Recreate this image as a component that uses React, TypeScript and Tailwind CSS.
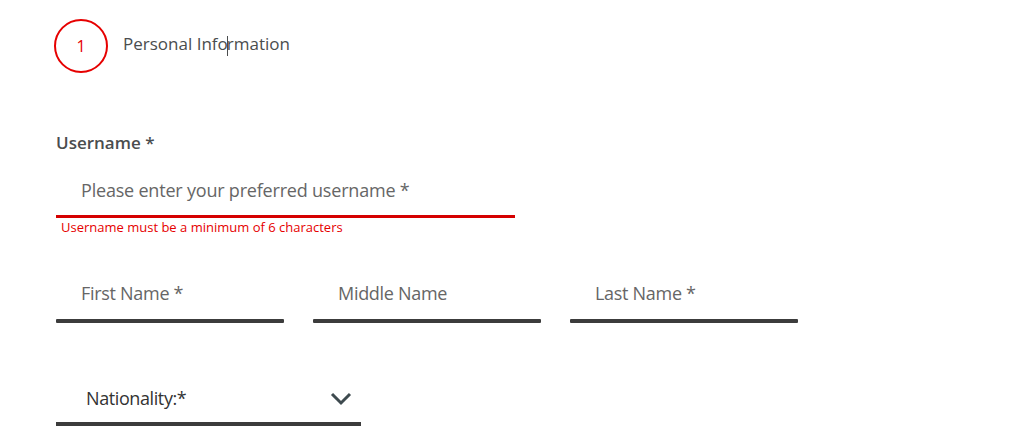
const font = { fontFamily: "'Open Sans', 'Liberation Sans', sans-serif" };

const NameField = ({ label }: { label: string }) => (
  <div className="w-[228px]">
    <div className="h-[50px] flex items-center pl-[25px] text-[18px] text-[#666666] tracking-[-0.3px]">
      {label}
    </div>
    <div className="h-[4px] rounded-[1px] bg-[#3c3c3c]" />
  </div>
);

const App = () => {
  return (
    <div className="w-[1017px] h-[448px] bg-white overflow-hidden pl-[56px]" style={font}>
      {/* Step header */}
      <div className="flex items-center pt-[19px] -ml-[2px]">
        <div className="w-[54px] h-[54px] rounded-full border-2 border-[#e60000] flex items-center justify-center text-[#e60000] text-[16px]">
          1
        </div>
        <div className="ml-[15px] -mt-[4px] text-[17px] text-[#4a4d4e]">
          Personal Info<span className="inline-block w-px h-[20px] bg-[#4a4d4e] align-middle -mx-px" />rmation
        </div>
      </div>

      {/* Username */}
      <div className="mt-[57px] text-[17px] font-semibold text-[#4a4d4e]">Username *</div>
      <div className="w-[459px] mt-[11px]">
        <div className="h-[48px] flex items-center pl-[25px] text-[18px] text-[#666666] tracking-[-0.2px]">
          Please enter your preferred username *
        </div>
        <div className="h-[3px] bg-[#d50000]" />
      </div>
      <div className="pl-[5px] leading-[18px] text-[13px] text-[#e60000]">
        Username must be a minimum of 6 characters
      </div>

      {/* Names */}
      <div className="flex gap-[29px] mt-[33px]">
        <NameField label="First Name *" />
        <NameField label="Middle Name" />
        <NameField label="Last Name *" />
      </div>

      {/* Nationality */}
      <div className="w-[305px] mt-[53px]">
        <div className="h-[46px] flex items-center justify-between pl-[30px] pr-[9px] text-[18px] text-[#333333]">
          <span className="tracking-[-0.4px]">Nationality:*</span>
          <svg width="22" height="14" viewBox="0 0 22 14" fill="none">
            <path d="M2 2l9 9 9-9" stroke="#3e4a4f" strokeWidth="3" />
          </svg>
        </div>
        <div className="h-[4px] bg-[#3c3c3c]" />
      </div>
    </div>
  );
};

export default App;
